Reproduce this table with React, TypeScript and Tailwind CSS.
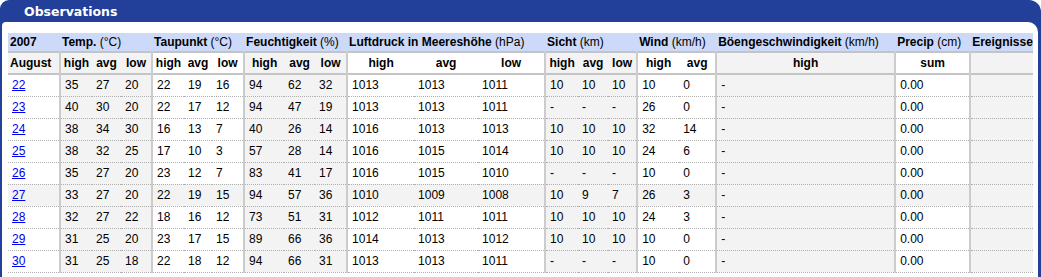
import { FC } from "react";

const widths = [52, 32, 29, 31, 32, 28, 32, 40, 31, 32, 67, 64, 67, 33, 30, 29, 42, 37, 179, 75, 63];
// first column of each group gets the solid separator
const groupStart = [1, 4, 7, 10, 13, 16, 18, 19, 20];
const grayCols = [1, 2, 3, 7, 8, 9, 13, 14, 15, 18, 20];

const sub = ["high", "avg", "low", "high", "avg", "low", "high", "avg", "low", "high", "avg", "low", "high", "avg", "low", "high", "avg", "high", "sum", ""];

const groups: { name: string; unit: string; span: number }[] = [
  { name: "2007", unit: "", span: 1 },
  { name: "Temp.", unit: "(°C)", span: 3 },
  { name: "Taupunkt", unit: "(°C)", span: 3 },
  { name: "Feuchtigkeit", unit: "(%)", span: 3 },
  { name: "Luftdruck in Meereshöhe", unit: "(hPa)", span: 3 },
  { name: "Sicht", unit: "(km)", span: 3 },
  { name: "Wind", unit: "(km/h)", span: 2 },
  { name: "Böengeschwindigkeit", unit: "(km/h)", span: 1 },
  { name: "Precip", unit: "(cm)", span: 1 },
  { name: "Ereignisse", unit: "", span: 1 },
];

const rows: string[][] = [
  ["22", "35", "27", "20", "22", "19", "16", "94", "62", "32", "1013", "1013", "1011", "10", "10", "10", "10", "0", "-", "0.00", ""],
  ["23", "40", "30", "20", "22", "17", "12", "94", "47", "19", "1013", "1013", "1011", "-", "-", "-", "26", "0", "-", "0.00", ""],
  ["24", "38", "34", "30", "16", "13", "7", "40", "26", "14", "1016", "1013", "1013", "10", "10", "10", "32", "14", "-", "0.00", ""],
  ["25", "38", "32", "25", "17", "10", "3", "57", "28", "14", "1016", "1015", "1014", "10", "10", "10", "24", "6", "-", "0.00", ""],
  ["26", "35", "27", "20", "23", "12", "7", "83", "41", "17", "1016", "1015", "1010", "-", "-", "-", "10", "0", "-", "0.00", ""],
  ["27", "33", "27", "20", "22", "19", "15", "94", "57", "36", "1010", "1009", "1008", "10", "9", "7", "26", "3", "-", "0.00", ""],
  ["28", "32", "27", "22", "18", "16", "12", "73", "51", "31", "1012", "1011", "1011", "10", "10", "10", "24", "3", "-", "0.00", ""],
  ["29", "31", "25", "20", "23", "17", "15", "89", "66", "36", "1014", "1013", "1012", "10", "10", "10", "10", "0", "-", "0.00", ""],
  ["30", "31", "25", "18", "22", "18", "12", "94", "66", "31", "1013", "1013", "1011", "-", "-", "-", "10", "0", "-", "0.00", ""],
];

const cellBg = (i: number) => (grayCols.includes(i) ? "bg-[#f3f3f3]" : "bg-white");
const cellBorder = (i: number) => (groupStart.includes(i) ? "border-l-2 border-l-[#cccccc]" : "");

const App: FC = () => {
  return (
    <div className="w-[1041px] h-[277px] overflow-hidden bg-white font-['Liberation_Sans',Arial,sans-serif] text-[12px] text-black">
      <div className="h-full flex flex-col bg-[#223f99] rounded-tl-[9px] rounded-tr-[12px] pl-[2px] pr-[3px]">
        <div className="h-[22px] shrink-0 pl-[22px] leading-[24px] text-white font-bold text-[12.5px] font-['DejaVu_Sans',Verdana,sans-serif]">
          Observations
        </div>
        <div className="flex-1 bg-white rounded-tl-[4px] rounded-tr-[10px] pt-[11px] pl-[6px] pr-[5px] overflow-hidden">
          <table className="table-fixed border-collapse w-[1025px]">
            <colgroup>
              {widths.map((w, i) => (
                <col key={i} style={{ width: w }} />
              ))}
            </colgroup>
            <thead>
              <tr className="h-[18px] bg-[#ccd9f8] border-b-2 border-b-[#c4c4c4]">
                {groups.map((g) => (
                  <th key={g.name} colSpan={g.span} className="text-left font-bold px-[2px] py-0 whitespace-nowrap leading-[18px]">
                    {g.name}
                    {g.unit && <span className="font-normal"> {g.unit}</span>}
                  </th>
                ))}
              </tr>
              <tr className="h-[22px] border-b-2 border-b-[#c4c4c4]">
                <th className="text-left font-bold px-[2px] bg-[#f3f3f3]">August</th>
                {sub.map((s, j) => (
                  <th key={j} className={`text-center font-bold p-0 ${cellBg(j + 1)} ${cellBorder(j + 1)}`}>
                    {s}
                  </th>
                ))}
              </tr>
            </thead>
            <tbody>
              {rows.map((r) => {
                const hl = r[0] === "27";
                return (
                  <tr key={r[0]} className="h-[22px] border-b border-dotted border-b-[#b0b0b0]">
                    {r.map((v, i) =>
                      i === 0 ? (
                        <td key={i} className={`px-[4px] ${hl ? "bg-[#f3f3f3]" : "bg-white"}`}>
                          <a href="#" className="text-[#0000ee] underline">
                            {v}
                          </a>
                        </td>
                      ) : (
                        <td key={i} className={`pl-[4px] pr-0 whitespace-nowrap ${hl ? "bg-[#f3f3f3]" : cellBg(i)} ${cellBorder(i)}`}>
                          {v}
                        </td>
                      )
                    )}
                  </tr>
                );
              })}
            </tbody>
          </table>
        </div>
      </div>
    </div>
  );
};

export default App;
